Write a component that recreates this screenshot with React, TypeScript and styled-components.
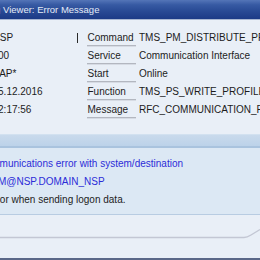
import styled, { createGlobalStyle } from "styled-components";

const GlobalStyle = createGlobalStyle`
  html, body {
    margin: 0;
    padding: 0;
    background: #e9eff7;
    overflow: hidden;
  }
  body {
    font-family: "Liberation Sans", Arial, sans-serif;
  }
`;

const Window = styled.div`
  width: 260px;
  height: 260px;
  display: flex;
  flex-direction: column;
  overflow: hidden;
  background: #e9eff7;
  color: #1c1c1c;
`;

const TitleBar = styled.div`
  height: 19px;
  flex: none;
  display: flex;
  align-items: center;
  border-bottom: 1px solid #a9b7d2;
  background: linear-gradient(#5475b8 0%, #375aa3 25%, #284994 60%, #1c3a86 100%);
  overflow: hidden;
`;

const Title = styled.span`
  margin-left: -15.5px;
  font-size: 9.5px;
  color: #e4ebf7;
  white-space: nowrap;
`;

// header fields of the viewer
const Form = styled.div`
  height: 114px;
  flex: none;
  box-sizing: border-box;
  padding-top: 9px;
  margin-left: -7.5px;
  overflow: hidden;
`;

const Row = styled.div`
  display: grid;
  grid-template-columns: 84.5px 10px 49px 1fr;
  height: 18px;
  line-height: 18px;
  font-size: 10px;
  white-space: nowrap;
`;

const Field = styled.span`
  overflow: hidden;
`;

const Marker = styled.span<{ $cursor?: boolean }>`
  &::before {
    content: "";
    display: ${({ $cursor }) => ($cursor ? "block" : "none")};
    width: 1px;
    height: 10px;
    margin-top: 4px;
    background: #2a2a2a;
  }
`;

const Label = styled.span`
  box-sizing: border-box;
  height: 17px;
  padding-left: 0.5px;
  border-bottom: 1px solid #b3b7c0;
  box-shadow: 0 1px 0 #d6dbe4;
  overflow: hidden;
`;

const Value = styled.span`
  padding-left: 3px;
  overflow: hidden;
`;

const PanelHeader = styled.div`
  height: 14px;
  flex: none;
  box-sizing: border-box;
  border-top: 1px solid #d2e1f0;
  border-bottom: 2px solid #a9c3de;
  background: linear-gradient(#c9daec, #bcd2e9);
`;

const PanelBody = styled.div`
  height: 67px;
  flex: none;
  box-sizing: border-box;
  padding-top: 6.5px;
  background: #dce8f4;
  border-bottom: 1px solid #b8cce2;
  overflow: hidden;
`;

const MessageLine = styled.div<{ $indent: number; $blue?: boolean }>`
  height: 18px;
  line-height: 18px;
  font-size: 10px;
  white-space: nowrap;
  margin-left: ${({ $indent }) => $indent}px;
  color: ${({ $blue }) => ($blue ? "#2c2cd8" : "#1c1c1c")};
`;

const Footer = styled.div`
  flex: 1;
  display: flex;
  border-bottom: 2px solid #5a6788;
  background: #e9eff7;
`;

const fields = [
  { value: "NSP", label: "Command", text: "TMS_PM_DISTRIBUTE_PROFILES", cursor: true },
  { value: "000", label: "Service", text: "Communication Interface" },
  { value: "SAP*", label: "Start", text: "Online" },
  { value: "15.12.2016", label: "Function", text: "TMS_PS_WRITE_PROFILE_TO_FILE" },
  { value: "12:17:56", label: "Message", text: "RFC_COMMUNICATION_FAILURE" },
];

const messages = [
  { text: "Communications error with system/destination", indent: -21.5, blue: true },
  { text: "TMSADM@NSP.DOMAIN_NSP", indent: -37, blue: true },
  { text: "Error when sending logon data.", indent: -13.5 },
];

export default function App() {
  return (
    <>
      <GlobalStyle />
      <Window>
        <TitleBar>
          <Title>Log Viewer: Error Message</Title>
        </TitleBar>
        <Form>
          {fields.map((f) => (
            <Row key={f.label}>
              <Field>{f.value}</Field>
              <Marker $cursor={f.cursor} />
              <Label>{f.label}</Label>
              <Value>{f.text}</Value>
            </Row>
          ))}
        </Form>
        <PanelHeader />
        <PanelBody>
          {messages.map((m) => (
            <MessageLine key={m.text} $indent={m.indent} $blue={m.blue}>
              {m.text}
            </MessageLine>
          ))}
        </PanelBody>
        <Footer>
          <svg width="260" height="39" viewBox="0 0 260 39">
            <path
              d="M0 22.5 H244 Q247 22.5 251 20 L260 14.5"
              fill="none"
              stroke="#c3c7d4"
              strokeWidth="1.4"
            />
          </svg>
        </Footer>
      </Window>
    </>
  );
}
